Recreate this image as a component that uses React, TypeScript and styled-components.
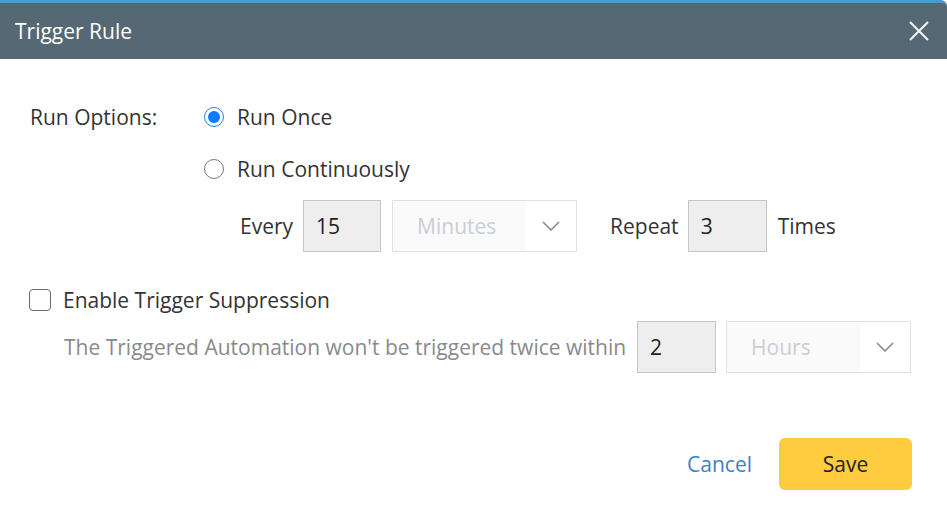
import React from "react";
import styled, { createGlobalStyle } from "styled-components";

const Global = createGlobalStyle`
  html, body { margin: 0; padding: 0; background: #ffffff; }
  body { font-family: "Open Sans", "Noto Sans", sans-serif; color: #333333; }
  * { box-sizing: border-box; }
`;

const Dialog = styled.div`
  width: 947px;
  height: 520px;
  background: #ffffff;
  display: flex;
  flex-direction: column;
`;

const Header = styled.div`
  height: 59px;
  flex: none;
  background: #566873;
  border-top: 3px solid #4a9ad4;
  border-top-right-radius: 6px;
  display: flex;
  align-items: center;
  justify-content: space-between;
  padding: 0 17px 0 15px;
`;

const Title = styled.h1`
  margin: 0;
  font-size: 21px;
  font-weight: 400;
  color: #ffffff;
  line-height: 1;
`;

const CloseButton = styled.button`
  width: 22px;
  height: 22px;
  padding: 0;
  border: none;
  background: transparent;
  display: flex;
  align-items: center;
  justify-content: center;
  cursor: pointer;
`;

const Body = styled.div`
  flex: 1;
  display: flex;
  flex-direction: column;
  padding: 40px 35px 0 30px;
`;

const OptionsGrid = styled.div`
  display: grid;
  grid-template-columns: 174px 1fr;
  row-gap: 16px;
`;

const FieldLabel = styled.div`
  font-size: 21px;
  line-height: 36px;
  height: 36px;
`;

const RadioRow = styled.label`
  display: flex;
  align-items: center;
  gap: 13px;
  height: 36px;
  font-size: 21px;
  cursor: pointer;
`;

const RadioCircle = styled.span<{ $checked?: boolean }>`
  width: 20px;
  height: 20px;
  flex: none;
  border-radius: 50%;
  border: ${(p) => (p.$checked ? "1.5px solid #1a80f5" : "1px solid #7a7a7a")};
  display: flex;
  align-items: center;
  justify-content: center;
  background: #fff;
  &::after {
    content: "";
    width: 12px;
    height: 12px;
    border-radius: 50%;
    background: ${(p) => (p.$checked ? "#0b7bff" : "transparent")};
  }
`;

const InlineRow = styled.div<{ $indent?: number; $muted?: boolean; $top?: number }>`
  display: flex;
  align-items: center;
  height: 52px;
  margin-top: ${(p) => p.$top ?? 0}px;
  padding-left: ${(p) => p.$indent ?? 0}px;
  font-size: 21px;
  color: ${(p) => (p.$muted ? "#8a8a8a" : "#333333")};
`;

const Text = styled.span<{ $gapRight?: number }>`
  margin-right: ${(p) => p.$gapRight ?? 10}px;
  white-space: nowrap;
`;

const NumberBox = styled.div<{ $gapRight?: number; $width?: number }>`
  width: ${(p) => p.$width ?? 78}px;
  height: 52px;
  flex: none;
  background: #eeeeee;
  border: 1px solid #c6c6c6;
  padding-left: 12px;
  display: flex;
  align-items: center;
  font-size: 21px;
  color: #222;
  margin-right: ${(p) => p.$gapRight ?? 11}px;
`;

const Select = styled.div<{ $gapRight?: number }>`
  width: 185px;
  height: 52px;
  flex: none;
  border: 1px solid #e1e1e1;
  display: flex;
  margin-right: ${(p) => p.$gapRight ?? 0}px;
`;

const SelectValue = styled.div`
  flex: 1;
  background: #fafafa;
  padding-left: 24px;
  display: flex;
  align-items: center;
  font-size: 21px;
  color: #c9cfd4;
`;

const SelectArrow = styled.div`
  width: 50px;
  background: #ffffff;
  display: flex;
  align-items: center;
  justify-content: center;
`;

const CheckRow = styled.label`
  display: flex;
  align-items: center;
  gap: 12px;
  height: 36px;
  margin-top: 30px;
  margin-left: -1px;
  font-size: 21px;
  cursor: pointer;
`;

const CheckBox = styled.span`
  width: 22px;
  height: 22px;
  border: 1px solid #6a6a6a;
  border-radius: 4px;
  background: #fff;
`;

const Footer = styled.div`
  display: flex;
  justify-content: flex-end;
  align-items: center;
  gap: 27px;
  margin-top: 65px;
`;

const LinkButton = styled.button`
  border: none;
  background: transparent;
  padding: 0;
  font-family: inherit;
  font-size: 21px;
  color: #3b82c4;
  cursor: pointer;
`;

const PrimaryButton = styled.button`
  width: 133px;
  height: 52px;
  border: none;
  border-radius: 6px;
  background: #ffcb3f;
  font-family: inherit;
  font-size: 21px;
  color: #222;
  cursor: pointer;
`;

const Chevron = () => (
  <svg width="18" height="10" viewBox="0 0 18 10" fill="none">
    <path d="M1 1 L9 9 L17 1" stroke="#8a8a8a" strokeWidth="1.6" />
  </svg>
);

const CloseIcon = () => (
  <svg width="20" height="20" viewBox="0 0 20 20" fill="none">
    <path d="M1 1 L19 19 M19 1 L1 19" stroke="#eef1f3" strokeWidth="2.2" />
  </svg>
);

export default function App() {
  return (
    <>
      <Global />
      <Dialog>
        <Header>
          <Title>Trigger Rule</Title>
          <CloseButton aria-label="Close">
            <CloseIcon />
          </CloseButton>
        </Header>
        <Body>
          <OptionsGrid>
            <FieldLabel>Run Options:</FieldLabel>
            <RadioRow>
              <RadioCircle $checked />
              Run Once
            </RadioRow>
            <span />
            <div>
              <RadioRow>
                <RadioCircle />
                Run Continuously
              </RadioRow>
              <InlineRow $indent={36} $top={13}>
                <Text>Every</Text>
                <NumberBox>15</NumberBox>
                <Select $gapRight={33}>
                  <SelectValue>Minutes</SelectValue>
                  <SelectArrow>
                    <Chevron />
                  </SelectArrow>
                </Select>
                <Text $gapRight={9}>Repeat</Text>
                <NumberBox $width={79}>3</NumberBox>
                <Text>Times</Text>
              </InlineRow>
            </div>
          </OptionsGrid>
          <CheckRow>
            <CheckBox />
            Enable Trigger Suppression
          </CheckRow>
          <InlineRow $indent={34} $muted $top={3}>
            <Text $gapRight={11}>The Triggered Automation won't be triggered twice within</Text>
            <NumberBox $width={79} $gapRight={10}>2</NumberBox>
            <Select>
              <SelectValue>Hours</SelectValue>
              <SelectArrow>
                <Chevron />
              </SelectArrow>
            </Select>
          </InlineRow>
          <Footer>
            <LinkButton>Cancel</LinkButton>
            <PrimaryButton>Save</PrimaryButton>
          </Footer>
        </Body>
      </Dialog>
    </>
  );
}
